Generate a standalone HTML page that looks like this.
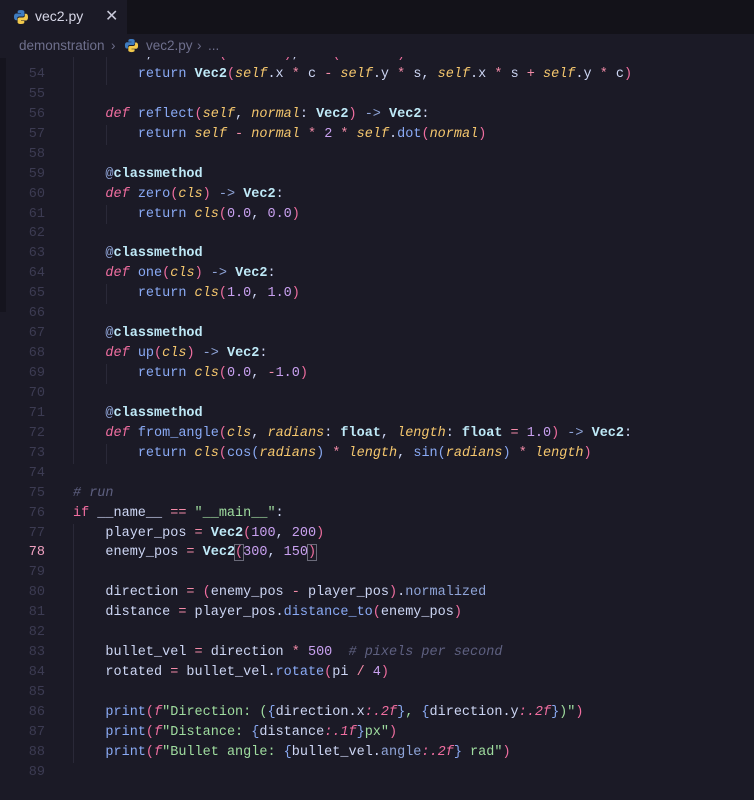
<!DOCTYPE html>
<html><head><meta charset="utf-8"><style>
*{margin:0;padding:0;box-sizing:border-box}
body{width:754px;height:800px;background:#1b1a26;overflow:hidden;position:relative;font-family:"Liberation Mono",monospace}
#tabs{position:absolute;left:0;top:0;width:754px;height:34px;background:#131219;z-index:3}
#tab{position:absolute;left:0;top:0;width:127px;height:34px;background:#1b1a26;font-family:"Liberation Sans",sans-serif;font-size:14px;color:#d6d6e6}
#tab .nm{position:absolute;left:35px;top:8px}
#tab .x{position:absolute;left:105px;top:6px;font-size:16px;color:#c8c8d8}
#bc{position:absolute;left:0;top:34px;width:754px;height:23px;background:#1b1a26;z-index:3;font-family:"Liberation Sans",sans-serif;font-size:13.5px;color:#6e6f8c}
#bc span{position:absolute;top:4px}
#strip{position:absolute;left:0;top:58px;width:6px;height:254px;background:#15141e;z-index:2}
#code{position:absolute;left:0;top:45px;width:754px}
.l{height:19.94px;line-height:19.94px;position:relative;white-space:pre;font-size:13.5px;color:#cdd6f4}
.n{position:absolute;left:0;width:45px;text-align:right;color:#3c3b52}
.t{position:absolute;left:73px}
.g1,.g2{position:absolute;top:0;width:1px;height:100%;background:#2a2938}
.g1{left:73px}.g2{left:106px}
.k{color:#8aaaf5}.d{color:#f06ea0;font-style:italic}.f{color:#8aaaf5}
.c{color:#bfe9f7;font-weight:bold}.s{color:#f5c76e;font-style:italic}
.o{color:#f38ba8}.p{color:#f06ea0}.m{color:#c8a0ef}.st{color:#9fdc9f}
.cm{color:#5e6080;font-style:italic}.at{color:#8fa4d8}.b{color:#89a8f0}
.dec{color:#bfe9f7;font-weight:bold}
.sel{outline:1px solid #6b6b7a}
</style></head><body>
<div id="tabs"><div id="tab">
<svg style="position:absolute;left:13px;top:9px" width="16" height="16" viewBox="0 0 16 16"><path d="M7.9 1C4.5 1 4.7 2.5 4.7 2.5V4h3.3v.5H3.3S1 4.2 1 7.8s2 3.4 2 3.4h1.2V9.5s-.1-2 2-2h3.3s1.9 0 1.9-1.8V2.8S11.7 1 7.9 1z" fill="#3f7cc0"/><path d="M8.1 15c3.4 0 3.2-1.5 3.2-1.5V12H8v-.5h4.7S15 11.8 15 8.2s-2-3.4-2-3.4h-1.2v1.7s.1 2-2 2H6.5s-1.9 0-1.9 1.8v2.9S4.3 15 8.1 15z" fill="#f2c94c"/></svg>
<span class="nm">vec2.py</span><span class="x">✕</span></div></div>
<div id="bc"><span style="left:19px">demonstration</span><span style="left:111px">›</span>
<svg style="position:absolute;left:124px;top:4px" width="15" height="15" viewBox="0 0 16 16"><path d="M7.9 1C4.5 1 4.7 2.5 4.7 2.5V4h3.3v.5H3.3S1 4.2 1 7.8s2 3.4 2 3.4h1.2V9.5s-.1-2 2-2h3.3s1.9 0 1.9-1.8V2.8S11.7 1 7.9 1z" fill="#3f7cc0"/><path d="M8.1 15c3.4 0 3.2-1.5 3.2-1.5V12H8v-.5h4.7S15 11.8 15 8.2s-2-3.4-2-3.4h-1.2v1.7s.1 2-2 2H6.5s-1.9 0-1.9 1.8v2.9S4.3 15 8.1 15z" fill="#f2c94c"/></svg>
<span style="left:146px">vec2.py</span><span style="left:197px">›</span><span style="left:208px">...</span></div>
<div id="strip"></div>
<div id="code">
<div class="l"><span class="n">53</span><i class="g1"></i><i class="g2"></i><span class="t">        c, s <span class="o">=</span> <span class="f">cos</span><span class="p">(</span><span class="s">radians</span><span class="p">)</span>, <span class="f">sin</span><span class="p">(</span><span class="s">radians</span><span class="p">)</span></span></div>
<div class="l"><span class="n">54</span><i class="g1"></i><i class="g2"></i><span class="t">        <span class="k">return</span> <span class="c">Vec2</span><span class="p">(</span><span class="s">self</span>.x <span class="o">*</span> c <span class="o">-</span> <span class="s">self</span>.y <span class="o">*</span> s, <span class="s">self</span>.x <span class="o">*</span> s <span class="o">+</span> <span class="s">self</span>.y <span class="o">*</span> c<span class="p">)</span></span></div>
<div class="l"><span class="n">55</span><i class="g1"></i><span class="t"></span></div>
<div class="l"><span class="n">56</span><i class="g1"></i><span class="t">    <span class="d">def</span> <span class="f">reflect</span><span class="p">(</span><span class="s">self</span>, <span class="s">normal</span>: <span class="c">Vec2</span><span class="p">)</span> <span class="at">-&gt;</span> <span class="c">Vec2</span>:</span></div>
<div class="l"><span class="n">57</span><i class="g1"></i><i class="g2"></i><span class="t">        <span class="k">return</span> <span class="s">self</span> <span class="o">-</span> <span class="s">normal</span> <span class="o">*</span> <span class="m">2</span> <span class="o">*</span> <span class="s">self</span>.<span class="f">dot</span><span class="p">(</span><span class="s">normal</span><span class="p">)</span></span></div>
<div class="l"><span class="n">58</span><i class="g1"></i><span class="t"></span></div>
<div class="l"><span class="n">59</span><i class="g1"></i><span class="t">    <span class="at">@</span><span class="dec">classmethod</span></span></div>
<div class="l"><span class="n">60</span><i class="g1"></i><span class="t">    <span class="d">def</span> <span class="f">zero</span><span class="p">(</span><span class="s">cls</span><span class="p">)</span> <span class="at">-&gt;</span> <span class="c">Vec2</span>:</span></div>
<div class="l"><span class="n">61</span><i class="g1"></i><i class="g2"></i><span class="t">        <span class="k">return</span> <span class="s">cls</span><span class="p">(</span><span class="m">0.0</span>, <span class="m">0.0</span><span class="p">)</span></span></div>
<div class="l"><span class="n">62</span><i class="g1"></i><span class="t"></span></div>
<div class="l"><span class="n">63</span><i class="g1"></i><span class="t">    <span class="at">@</span><span class="dec">classmethod</span></span></div>
<div class="l"><span class="n">64</span><i class="g1"></i><span class="t">    <span class="d">def</span> <span class="f">one</span><span class="p">(</span><span class="s">cls</span><span class="p">)</span> <span class="at">-&gt;</span> <span class="c">Vec2</span>:</span></div>
<div class="l"><span class="n">65</span><i class="g1"></i><i class="g2"></i><span class="t">        <span class="k">return</span> <span class="s">cls</span><span class="p">(</span><span class="m">1.0</span>, <span class="m">1.0</span><span class="p">)</span></span></div>
<div class="l"><span class="n">66</span><i class="g1"></i><span class="t"></span></div>
<div class="l"><span class="n">67</span><i class="g1"></i><span class="t">    <span class="at">@</span><span class="dec">classmethod</span></span></div>
<div class="l"><span class="n">68</span><i class="g1"></i><span class="t">    <span class="d">def</span> <span class="f">up</span><span class="p">(</span><span class="s">cls</span><span class="p">)</span> <span class="at">-&gt;</span> <span class="c">Vec2</span>:</span></div>
<div class="l"><span class="n">69</span><i class="g1"></i><i class="g2"></i><span class="t">        <span class="k">return</span> <span class="s">cls</span><span class="p">(</span><span class="m">0.0</span>, <span class="o">-</span><span class="m">1.0</span><span class="p">)</span></span></div>
<div class="l"><span class="n">70</span><i class="g1"></i><span class="t"></span></div>
<div class="l"><span class="n">71</span><i class="g1"></i><span class="t">    <span class="at">@</span><span class="dec">classmethod</span></span></div>
<div class="l"><span class="n">72</span><i class="g1"></i><span class="t">    <span class="d">def</span> <span class="f">from_angle</span><span class="p">(</span><span class="s">cls</span>, <span class="s">radians</span>: <span class="c">float</span>, <span class="s">length</span>: <span class="c">float</span> <span class="o">=</span> <span class="m">1.0</span><span class="p">)</span> <span class="at">-&gt;</span> <span class="c">Vec2</span>:</span></div>
<div class="l"><span class="n">73</span><i class="g1"></i><i class="g2"></i><span class="t">        <span class="k">return</span> <span class="s">cls</span><span class="p">(</span><span class="f">cos</span><span class="b">(</span><span class="s">radians</span><span class="b">)</span> <span class="o">*</span> <span class="s">length</span>, <span class="f">sin</span><span class="b">(</span><span class="s">radians</span><span class="b">)</span> <span class="o">*</span> <span class="s">length</span><span class="p">)</span></span></div>
<div class="l"><span class="n">74</span><span class="t"></span></div>
<div class="l"><span class="n">75</span><span class="t"><span class="cm"># run</span></span></div>
<div class="l"><span class="n">76</span><span class="t"><span class="d" style="font-style:normal">if</span> __name__ <span class="o">==</span> <span class="st">"__main__"</span>:</span></div>
<div class="l"><span class="n">77</span><i class="g1"></i><span class="t">    player_pos <span class="o">=</span> <span class="c">Vec2</span><span class="p">(</span><span class="m">100</span>, <span class="m">200</span><span class="p">)</span></span></div>
<div class="l"><span class="n" style="color:#f0a0c0">78</span><i class="g1"></i><span class="t">    enemy_pos <span class="o">=</span> <span class="c">Vec2</span><span class="p sel">(</span><span class="m">300</span>, <span class="m">150</span><span class="p sel">)</span></span></div>
<div class="l"><span class="n">79</span><i class="g1"></i><span class="t"></span></div>
<div class="l"><span class="n">80</span><i class="g1"></i><span class="t">    direction <span class="o">=</span> <span class="p">(</span>enemy_pos <span class="o">-</span> player_pos<span class="p">)</span>.<span class="at">normalized</span></span></div>
<div class="l"><span class="n">81</span><i class="g1"></i><span class="t">    distance <span class="o">=</span> player_pos.<span class="f">distance_to</span><span class="p">(</span>enemy_pos<span class="p">)</span></span></div>
<div class="l"><span class="n">82</span><i class="g1"></i><span class="t"></span></div>
<div class="l"><span class="n">83</span><i class="g1"></i><span class="t">    bullet_vel <span class="o">=</span> direction <span class="o">*</span> <span class="m">500</span>  <span class="cm"># pixels per second</span></span></div>
<div class="l"><span class="n">84</span><i class="g1"></i><span class="t">    rotated <span class="o">=</span> bullet_vel.<span class="f">rotate</span><span class="p">(</span>pi <span class="o">/</span> <span class="m">4</span><span class="p">)</span></span></div>
<div class="l"><span class="n">85</span><i class="g1"></i><span class="t"></span></div>
<div class="l"><span class="n">86</span><i class="g1"></i><span class="t">    <span class="f">print</span><span class="p">(</span><span class="d">f</span><span class="st">"Direction: (</span><span class="b">{</span>direction.x<span class="d">:.2f</span><span class="b">}</span><span class="st">, </span><span class="b">{</span>direction.y<span class="d">:.2f</span><span class="b">}</span><span class="st">)"</span><span class="p">)</span></span></div>
<div class="l"><span class="n">87</span><i class="g1"></i><span class="t">    <span class="f">print</span><span class="p">(</span><span class="d">f</span><span class="st">"Distance: </span><span class="b">{</span>distance<span class="d">:.1f</span><span class="b">}</span><span class="st">px"</span><span class="p">)</span></span></div>
<div class="l"><span class="n">88</span><i class="g1"></i><span class="t">    <span class="f">print</span><span class="p">(</span><span class="d">f</span><span class="st">"Bullet angle: </span><span class="b">{</span>bullet_vel.<span class="at">angle</span><span class="d">:.2f</span><span class="b">}</span><span class="st"> rad"</span><span class="p">)</span></span></div>
<div class="l"><span class="n">89</span><span class="t"></span></div>
</div>
</body></html>
